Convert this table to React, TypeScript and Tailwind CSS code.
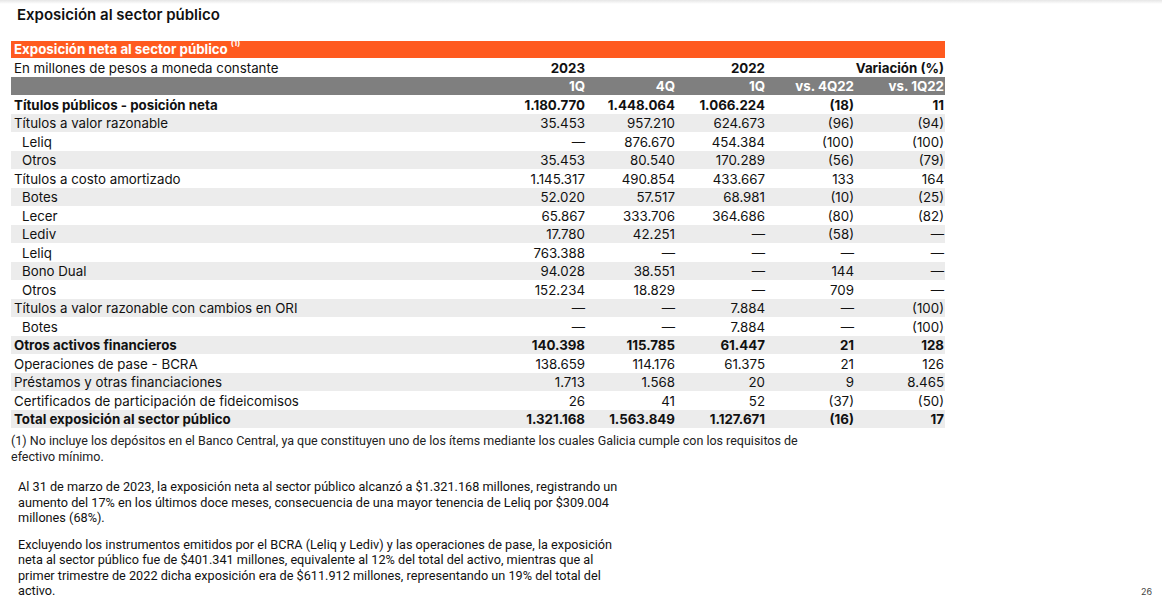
const rows: {
	label: string;
	values: string[];
	bold?: boolean;
	indent?: boolean;
}[] = [
	{ label: "Títulos públicos - posición neta", values: ["1.180.770", "1.448.064", "1.066.224", "(18)", "11"], bold: true },
	{ label: "Títulos a valor razonable", values: ["35.453", "957.210", "624.673", "(96)", "(94)"] },
	{ label: "Leliq", values: ["—", "876.670", "454.384", "(100)", "(100)"], indent: true },
	{ label: "Otros", values: ["35.453", "80.540", "170.289", "(56)", "(79)"], indent: true },
	{ label: "Títulos a costo amortizado", values: ["1.145.317", "490.854", "433.667", "133", "164"] },
	{ label: "Botes", values: ["52.020", "57.517", "68.981", "(10)", "(25)"], indent: true },
	{ label: "Lecer", values: ["65.867", "333.706", "364.686", "(80)", "(82)"], indent: true },
	{ label: "Lediv", values: ["17.780", "42.251", "—", "(58)", "—"], indent: true },
	{ label: "Leliq", values: ["763.388", "—", "—", "—", "—"], indent: true },
	{ label: "Bono Dual", values: ["94.028", "38.551", "—", "144", "—"], indent: true },
	{ label: "Otros", values: ["152.234", "18.829", "—", "709", "—"], indent: true },
	{ label: "Títulos a valor razonable con cambios en ORI", values: ["—", "—", "7.884", "—", "(100)"] },
	{ label: "Botes", values: ["—", "—", "7.884", "—", "(100)"], indent: true },
	{ label: "Otros activos financieros", values: ["140.398", "115.785", "61.447", "21", "128"], bold: true },
	{ label: "Operaciones de pase - BCRA", values: ["138.659", "114.176", "61.375", "21", "126"] },
	{ label: "Préstamos y otras financiaciones", values: ["1.713", "1.568", "20", "9", "8.465"] },
	{ label: "Certificados de participación de fideicomisos", values: ["26", "41", "52", "(37)", "(50)"] },
	{ label: "Total exposición al sector público", values: ["1.321.168", "1.563.849", "1.127.671", "(16)", "17"], bold: true },
];

const grid = "grid grid-cols-[1fr_90px_90px_90px_89px_90px] pr-px";

export default function App() {
	return (
		<div className="relative h-[605px] w-[1162px] overflow-hidden bg-white text-[#111] font-['Inter',sans-serif]">
			<div className="h-[4px] bg-gradient-to-b from-[#e6e6e6] to-white" />
			<h1 className="ml-[17px] mt-[2px] text-[15px] font-semibold leading-[18px]">Exposición al sector público</h1>

			<div className="ml-[11px] mt-[17px] w-[934px] text-[13.3px]">
				<div className="flex h-[17px] items-center bg-[#ff5a1f] pl-[3px] pt-px font-bold leading-none text-white">
					Exposición neta al sector público
					<sup className="ml-[3px] -mt-[6px] text-[8px]">(1)</sup>
				</div>
				<div className={`${grid} h-[19px] items-center pt-[3px] leading-none`}>
					<div className="pl-[3px]">En millones de pesos a moneda constante</div>
					<div className="text-right font-bold">2023</div>
					<div />
					<div className="text-right font-bold">2022</div>
					<div className="col-span-2 text-right font-bold">Variación (%)</div>
				</div>
				<div className={`${grid} h-[18px] items-center bg-[#7f7f7f] pt-[2px] font-bold leading-none text-white`}>
					<div />
					<div className="text-right">1Q</div>
					<div className="text-right">4Q</div>
					<div className="text-right">1Q</div>
					<div className="text-right">vs. 4Q22</div>
					<div className="text-right">vs. 1Q22</div>
				</div>
				{rows.map((row, i) => (
					<div
						key={i}
						className={`${grid} h-[18.5px] items-center pt-[2px] leading-none ${i % 2 === 1 ? "bg-[#ececec]" : ""} ${row.bold ? "font-bold" : ""}`}
					>
						<div className={row.indent ? "pl-[11px]" : "pl-[3px]"}>{row.label}</div>
						{row.values.map((v, j) => (
							<div key={j} className="text-right">
								{v}
							</div>
						))}
					</div>
				))}
			</div>

			<p className="ml-[11px] mt-[5px] w-[800px] font-['Roboto',sans-serif] text-[12.5px] leading-[16px] text-[#222]">
				(1) No incluye los depósitos en el Banco Central, ya que constituyen uno de los ítems mediante los cuales Galicia cumple con los requisitos de efectivo mínimo.
			</p>

			<div className="ml-[18px] mt-[14px] w-[602px] font-['Roboto',sans-serif] text-[12.7px] leading-[15.5px] text-[#111]">
				<p>
					Al 31 de marzo de 2023, la exposición neta al sector público alcanzó a $1.321.168 millones, registrando un aumento del 17% en los últimos doce meses, consecuencia de una mayor tenencia de Leliq por $309.004 millones (68%).
				</p>
				<p className="mt-[11px]">
					Excluyendo los instrumentos emitidos por el BCRA (Leliq y Lediv) y las operaciones de pase, la exposición neta al sector público fue de $401.341 millones, equivalente al 12% del total del activo, mientras que al primer trimestre de 2022 dicha exposición era de $611.912 millones, representando un 19% del total del activo.
				</p>
			</div>

			<div className="absolute bottom-[7px] right-[10px] font-['Inter',sans-serif] text-[9px] text-[#444]">26</div>
		</div>
	);
}
